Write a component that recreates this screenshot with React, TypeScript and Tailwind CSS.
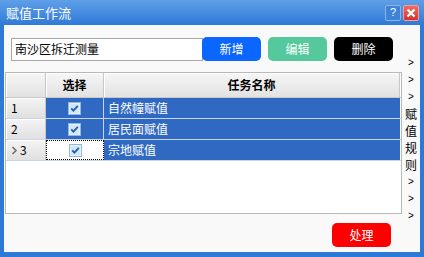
import React from 'react';

type taskType = {
  id: number,
  name: string,
  checked: boolean,
  current?: boolean
}

const tasks: taskType[] = [
  { id: 1, name: '自然幢赋值', checked: true },
  { id: 2, name: '居民面赋值', checked: true },
  { id: 3, name: '宗地赋值', checked: true, current: true },
];

const sideItems = ['>', '>', '>', '赋', '值', '规', '则', '>', '>', '>'];

const CheckBox = () => (
  <svg width="13" height="13" viewBox="0 0 13 13">
    <rect x="0.5" y="0.5" width="12" height="12" fill="#e4f0fb" stroke="#8fb8e4" />
    <rect x="2" y="2" width="9" height="9" fill="#d2e6f8" />
    <path d="M3.2 6.4 L5.4 8.6 L9.8 3.8" fill="none" stroke="#1f5fb8" strokeWidth="1.8" />
  </svg>
);

export default function App() {
  return (
    <div className="w-[424px] h-[257px] bg-[#2c79d7] flex flex-col font-['Microsoft_YaHei','Noto_Sans_CJK_SC',sans-serif] overflow-hidden">
      {/* title bar */}
      <div className="h-[25px] flex items-center pl-[6px] pr-[5px] bg-gradient-to-b from-[#5f9fe8] to-[#2e7ad8]">
        <span className="text-white text-[13px] leading-none">赋值工作流</span>
        <div className="ml-auto flex gap-[2px]">
          <div className="w-[16px] h-[16px] rounded-[2px] border border-[#8fb4e4] bg-[#3e83d6] flex items-center justify-center text-white text-[11px] leading-none font-['Liberation_Sans',sans-serif]">?</div>
          <div className="w-[16px] h-[16px] rounded-[2px] border border-[#f0a0a0] bg-gradient-to-b from-[#f26a5e] to-[#d8302a] flex items-center justify-center">
            <svg width="10" height="10" viewBox="0 0 10 10">
              <path d="M1.5 1.5 L8.5 8.5 M8.5 1.5 L1.5 8.5" stroke="white" strokeWidth="2.4" />
            </svg>
          </div>
        </div>
      </div>

      {/* content */}
      <div className="flex-1 mx-[4px] mb-[5px] bg-[#f9f9f9] flex">
        <div className="w-[398px] flex flex-col">
          <div className="pt-[12px] pl-[7px] flex items-center">
            <div className="w-[192px] h-[23px] border border-[#a8a8a8] bg-white flex items-center pl-[3px] text-[12px] text-black">南沙区拆迁测量</div>
            <button className="w-[59px] h-[24px] ml-[-1px] rounded-[5px] bg-[#0a66ff] text-white text-[12px]">新增</button>
            <button className="w-[59px] h-[24px] ml-[7px] rounded-[5px] bg-[#55c99d] text-white text-[12px]">编辑</button>
            <button className="w-[59px] h-[24px] ml-[7px] rounded-[5px] bg-black text-white text-[12px]">删除</button>
          </div>

          <div className="mt-[11px] ml-[1px] w-[397px] h-[142px] border border-[#b9b9b9] bg-white flex flex-col text-[12px]">
            <div className="flex h-[25px] border-b border-[#c8c8c8]">
              <div className="w-[40px] border-r border-[#c8c8c8] bg-gradient-to-b from-[#f6f6f6] to-[#e2e2e2] shadow-[inset_1px_1px_0_#ffffff]" />
              <div className="w-[58px] border-r border-[#c8c8c8] bg-gradient-to-b from-[#f6f6f6] to-[#e2e2e2] shadow-[inset_1px_1px_0_#ffffff] flex items-center justify-center font-bold text-black">选择</div>
              <div className="w-[296px] border-r border-[#c8c8c8] bg-gradient-to-b from-[#f6f6f6] to-[#e2e2e2] shadow-[inset_1px_1px_0_#ffffff] flex items-center justify-center font-bold text-black">任务名称</div>
            </div>
            {tasks.map(task => (
              <div key={task.id} className="flex h-[21px] border-b border-[#c8d4e8]">
                <div className="w-[40px] border-r border-[#c8c8c8] bg-gradient-to-b from-[#f4f4f4] to-[#e0e0e0] shadow-[inset_1px_1px_0_#ffffff] flex items-center pl-[5px] text-black">
                  {task.current && (
                    <svg width="7" height="9" viewBox="0 0 7 9" className="mr-[2px]">
                      <path d="M1.5 1 L5 4.5 L1.5 8" fill="none" stroke="#707070" strokeWidth="1.6" />
                    </svg>
                  )}
                  {task.id}
                </div>
                <div className={task.current
                  ? 'w-[58px] border border-dotted border-black bg-white flex items-center justify-center'
                  : 'w-[58px] border-r border-[#c8d4e8] bg-[#2f69c2] flex items-center justify-center'}>
                  {task.checked && <CheckBox />}
                </div>
                <div className="w-[296px] bg-[#2f69c2] text-white flex items-center pl-[4px]">{task.name}</div>
              </div>
            ))}
          </div>

          <div className="flex justify-end pr-[11px] pt-[9px]">
            <button className="w-[59px] h-[24px] rounded-[5px] bg-[#ff0000] text-white text-[12px]">处理</button>
          </div>
        </div>

        <div className="flex-1 flex flex-col items-center pt-[29px]">
          {sideItems.map((item, i) => (
            <span key={i} className={item === '>'
              ? 'h-[17px] leading-[17px] text-[10px] text-black font-["Liberation_Sans",sans-serif]'
              : 'h-[17px] leading-[17px] text-[12px] text-black'}>{item}</span>
          ))}
        </div>
      </div>
    </div>
  );
}
